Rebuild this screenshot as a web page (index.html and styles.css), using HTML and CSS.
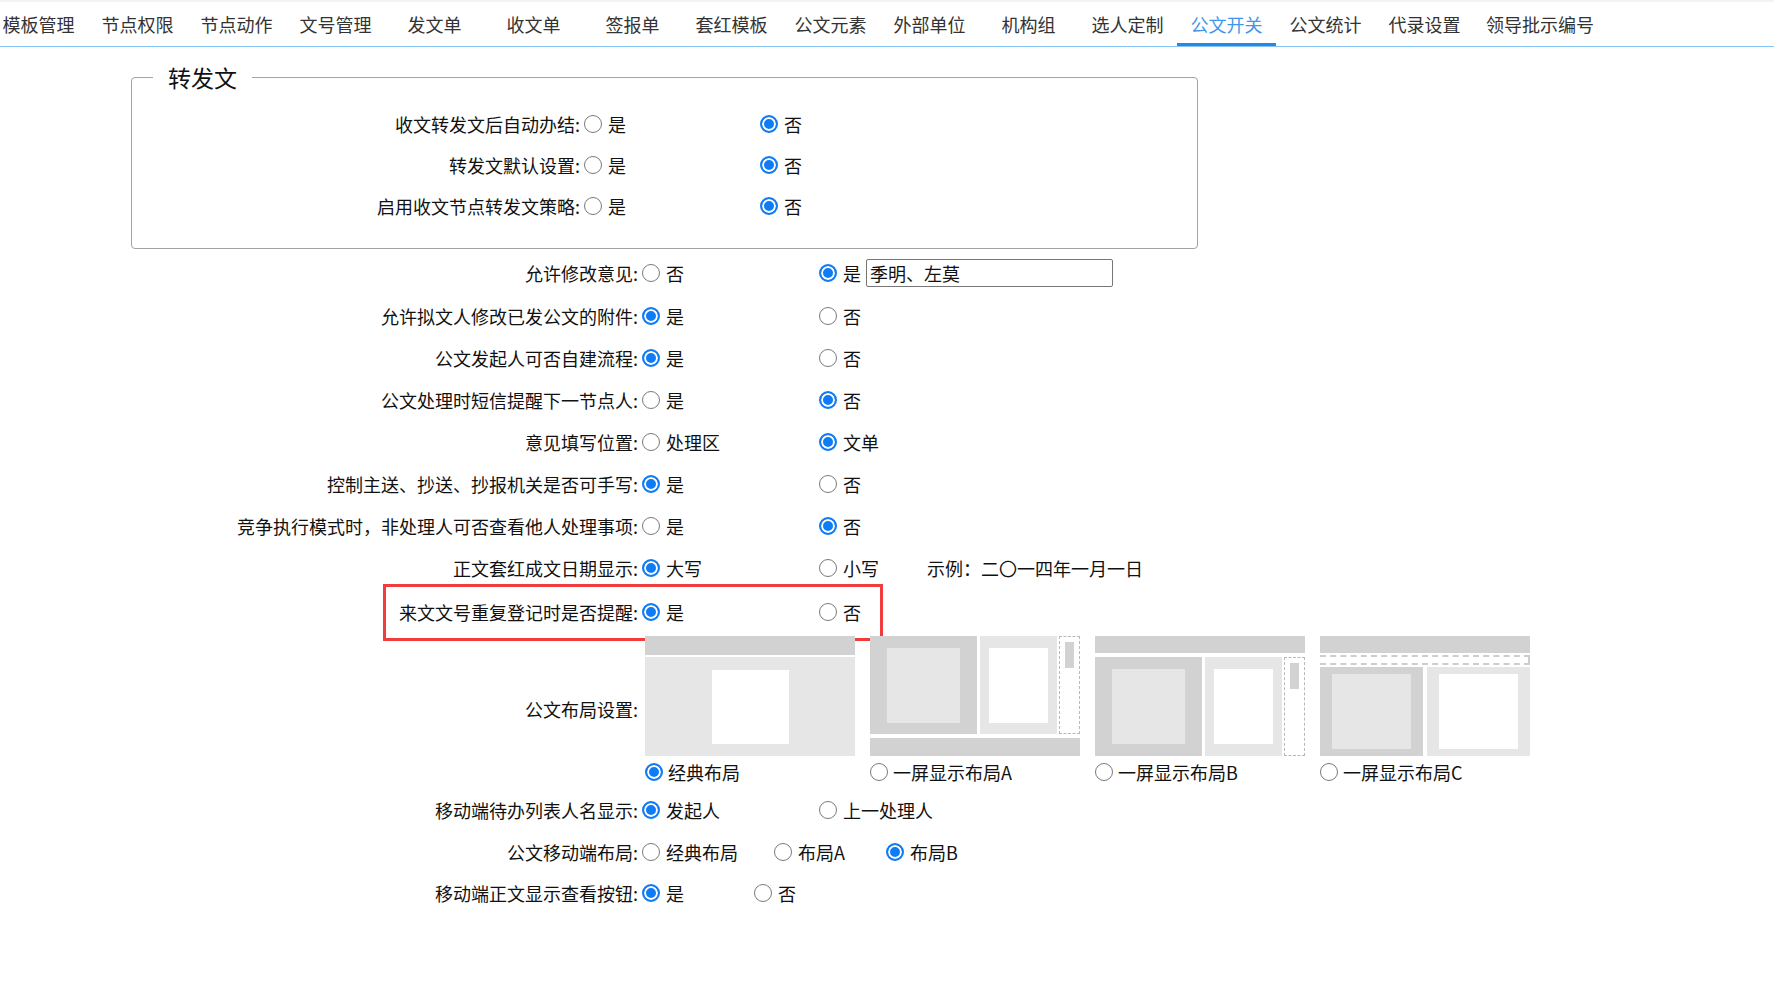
FILE: index.html
```html
<!DOCTYPE html>
<html lang="zh-CN">

<head>
    <meta charset="UTF-8">
    <meta name="viewport" content="width=device-width, initial-scale=1.0">
    <title>公文开关</title>
    <link rel="stylesheet" href="styles.css">
</head>

<body>
    <div class="tabs">
        <a href="javascript:;" class="tab">模板管理</a>
        <a href="javascript:;" class="tab">节点权限</a>
        <a href="javascript:;" class="tab">节点动作</a>
        <a href="javascript:;" class="tab">文号管理</a>
        <a href="javascript:;" class="tab">发文单</a>
        <a href="javascript:;" class="tab">收文单</a>
        <a href="javascript:;" class="tab">签报单</a>
        <a href="javascript:;" class="tab">套红模板</a>
        <a href="javascript:;" class="tab">公文元素</a>
        <a href="javascript:;" class="tab">外部单位</a>
        <a href="javascript:;" class="tab">机构组</a>
        <a href="javascript:;" class="tab">选人定制</a>
        <a href="javascript:;" class="tab on">公文开关</a>
        <a href="javascript:;" class="tab">公文统计</a>
        <a href="javascript:;" class="tab">代录设置</a>
        <a href="javascript:;" class="tab">领导批示编号</a>
    </div>

    <div class="page">
        <fieldset class="group">
            <legend>转发文</legend>
            <div class="row">
                <span class="label">收文转发文后自动办结:</span>
                <label class="opt"><input type="radio" name="r1">是</label>
                <label class="opt"><input type="radio" name="r1" checked>否</label>
            </div>
            <div class="row">
                <span class="label">转发文默认设置:</span>
                <label class="opt"><input type="radio" name="r2">是</label>
                <label class="opt"><input type="radio" name="r2" checked>否</label>
            </div>
            <div class="row">
                <span class="label">启用收文节点转发文策略:</span>
                <label class="opt"><input type="radio" name="r3">是</label>
                <label class="opt"><input type="radio" name="r3" checked>否</label>
            </div>
        </fieldset>

        <div class="row row-first">
            <span class="label">允许修改意见:</span>
            <label class="opt"><input type="radio" name="r4">否</label>
            <label class="opt"><input type="radio" name="r4" checked>是</label>
            <input type="text" class="names" value="季明、左莫">
        </div>
        <div class="row">
            <span class="label">允许拟文人修改已发公文的附件:</span>
            <label class="opt"><input type="radio" name="r5" checked>是</label>
            <label class="opt"><input type="radio" name="r5">否</label>
        </div>
        <div class="row">
            <span class="label">公文发起人可否自建流程:</span>
            <label class="opt"><input type="radio" name="r6" checked>是</label>
            <label class="opt"><input type="radio" name="r6">否</label>
        </div>
        <div class="row">
            <span class="label">公文处理时短信提醒下一节点人:</span>
            <label class="opt"><input type="radio" name="r7">是</label>
            <label class="opt"><input type="radio" name="r7" checked>否</label>
        </div>
        <div class="row">
            <span class="label">意见填写位置:</span>
            <label class="opt"><input type="radio" name="r8">处理区</label>
            <label class="opt"><input type="radio" name="r8" checked>文单</label>
        </div>
        <div class="row">
            <span class="label">控制主送、抄送、抄报机关是否可手写:</span>
            <label class="opt"><input type="radio" name="r9" checked>是</label>
            <label class="opt"><input type="radio" name="r9">否</label>
        </div>
        <div class="row">
            <span class="label">竞争执行模式时，非处理人可否查看他人处理事项:</span>
            <label class="opt"><input type="radio" name="r10">是</label>
            <label class="opt"><input type="radio" name="r10" checked>否</label>
        </div>
        <div class="row">
            <span class="label">正文套红成文日期显示:</span>
            <label class="opt"><input type="radio" name="r11" checked>大写</label>
            <label class="opt opt-sm"><input type="radio" name="r11">小写</label>
            <span class="hint">示例：二〇一四年一月一日</span>
        </div>
        <div class="row row-flag">
            <span class="label">来文文号重复登记时是否提醒:</span>
            <label class="opt"><input type="radio" name="r12" checked>是</label>
            <label class="opt"><input type="radio" name="r12">否</label>
            <div class="mark"></div>
        </div>

        <div class="row row-layout">
            <span class="label">公文布局设置:</span>
            <div class="layouts">
                <div class="layout">
                    <div class="thumb">
                        <div class="bar"></div>
                        <div class="pane pane-light pane-fill gap-2"><i class="sq sq-white sq-classic"></i></div>
                    </div>
                    <label class="cap"><input type="radio" name="r13" checked>经典布局</label>
                </div>
                <div class="layout">
                    <div class="thumb">
                        <div class="split split-a">
                            <div class="pane pane-dark pane-l"><i class="sq sq-light"></i></div>
                            <div class="pane pane-light pane-m"><i class="sq sq-white sq-m"></i></div>
                            <div class="vscroll"><i></i></div>
                        </div>
                        <div class="bar bar-bottom"></div>
                    </div>
                    <label class="cap"><input type="radio" name="r13">一屏显示布局A</label>
                </div>
                <div class="layout">
                    <div class="thumb">
                        <div class="bar bar-thin"></div>
                        <div class="split split-b">
                            <div class="pane pane-dark pane-l"><i class="sq sq-light"></i></div>
                            <div class="pane pane-light pane-m"><i class="sq sq-white sq-m"></i></div>
                            <div class="vscroll"><i></i></div>
                        </div>
                    </div>
                    <label class="cap"><input type="radio" name="r13">一屏显示布局B</label>
                </div>
                <div class="layout">
                    <div class="thumb">
                        <div class="bar bar-thin"></div>
                        <div class="hscroll"></div>
                        <div class="split split-c">
                            <div class="pane pane-dark pane-half"><i class="sq sq-light sq-c"></i></div>
                            <div class="pane pane-light pane-half"><i class="sq sq-white sq-c"></i></div>
                        </div>
                    </div>
                    <label class="cap"><input type="radio" name="r13">一屏显示布局C</label>
                </div>
            </div>
        </div>

        <div class="row">
            <span class="label">移动端待办列表人名显示:</span>
            <label class="opt"><input type="radio" name="r14" checked>发起人</label>
            <label class="opt"><input type="radio" name="r14">上一处理人</label>
        </div>
        <div class="row row-short">
            <span class="label">公文移动端布局:</span>
            <label class="opt opt-md"><input type="radio" name="r15">经典布局</label>
            <label class="opt opt-sm"><input type="radio" name="r15">布局A</label>
            <label class="opt"><input type="radio" name="r15" checked>布局B</label>
        </div>
        <div class="row">
            <span class="label">移动端正文显示查看按钮:</span>
            <label class="opt opt-sm"><input type="radio" name="r16" checked>是</label>
            <label class="opt"><input type="radio" name="r16">否</label>
        </div>
    </div>
</body>

</html>
```

FILE: styles.css
```css
body {
    margin: 0;
    background: #fff;
    color: #111;
    font-family: "Noto Sans CJK SC", "Noto Sans", sans-serif;
    font-size: 18px;
}

/* 顶部页签 */
.tabs {
    display: flex;
    margin-left: -11px;
    border-top: 2px solid #f3f3f3;
    border-bottom: 1px solid #84c4f4;
}

.tab {
    min-width: 99px;
    height: 44px;
    line-height: 44px;
    padding: 0 12px;
    box-sizing: border-box;
    text-align: center;
    text-decoration: none;
    color: #333;
    white-space: nowrap;
}

.tab.on {
    color: #4195ea;
    box-shadow: inset 0 -3px 0 #2388e6;
}

/* 表单 */
.row {
    display: flex;
    align-items: center;
    height: 42px;
    position: relative;
}

.row-first {
    height: 44px;
    margin-top: 2px;
}

.row-flag {
    height: 46px;
}

.row-short {
    height: 41px;
}

.label {
    width: 638px;
    flex-shrink: 0;
    text-align: right;
    white-space: nowrap;
}

.opt {
    display: flex;
    align-items: center;
    width: 177px;
    flex-shrink: 0;
    white-space: nowrap;
}

.opt-md {
    width: 132px;
}

.opt-sm {
    width: 112px;
}

/* 单选框 */
input[type="radio"] {
    -webkit-appearance: none;
    appearance: none;
    width: 18px;
    height: 18px;
    margin: 0 6px 0 4px;
    flex-shrink: 0;
    box-sizing: border-box;
    border: 1px solid #7a7a7a;
    border-radius: 50%;
    background: #fff;
}

input[type="radio"]:checked {
    border: 2px solid #0f7cf6;
    background: #0f7cf6;
    box-shadow: inset 0 0 0 2px #fff;
}

.names {
    width: 247px;
    height: 28px;
    box-sizing: border-box;
    margin-left: -126px;
    padding: 0 3px;
    border: 1px solid #767676;
    border-radius: 2px;
    font-family: inherit;
    font-size: 18px;
    color: #111;
}

.hint {
    white-space: nowrap;
}

/* 标注框 */
.mark {
    position: absolute;
    left: 383px;
    top: -5px;
    width: 500px;
    height: 57px;
    box-sizing: border-box;
    border: 3px solid #f03c3c;
}

/* 转发文分组 */
.group {
    width: 1067px;
    box-sizing: border-box;
    margin: 14px 0 0 131px;
    padding: 10px 0 22px;
    border: 1px solid #a3a3a3;
    border-radius: 4px;
}

.group legend {
    margin-left: 21px;
    padding: 0 15px;
    font-size: 23px;
    line-height: 32px;
    color: #111;
}

.group .row {
    height: 41px;
}

.group .label {
    width: 448px;
}

.group .opt {
    width: 176px;
}

/* 布局缩略图 */
.row-layout {
    height: 154px;
}

.row-layout .label {
    padding-bottom: 6px;
}

.layouts {
    display: flex;
    gap: 15px;
    margin-left: 7px;
    padding-top: 1px;
    align-self: flex-start;
}

.layout {
    width: 210px;
}

.thumb {
    width: 210px;
    height: 120px;
    display: flex;
    flex-direction: column;
}

.bar {
    height: 19px;
    background: #d2d2d2;
    flex-shrink: 0;
}

.bar-thin {
    height: 17px;
}

.bar-bottom {
    height: 18px;
    margin-top: 4px;
}

.pane {
    display: flex;
    align-items: center;
    justify-content: center;
}

.pane-dark {
    background: #d2d2d2;
}

.pane-light {
    background: #e6e6e6;
}

.pane-fill {
    flex: 1;
}

.gap-2 {
    margin-top: 2px;
}

.split {
    display: flex;
    flex: 1;
}

.split-b {
    margin-top: 4px;
}

.split-c {
    margin-top: 2px;
    gap: 4px;
}

.pane-l {
    width: 107px;
}

.pane-m {
    width: 77px;
    margin-left: 3px;
}

.pane-half {
    flex: 1;
}

.sq {
    display: block;
}

.sq-white {
    background: #fff;
}

.sq-light {
    background: #e6e6e6;
    width: 73px;
    height: 75px;
}

.sq-classic {
    width: 77px;
    height: 74px;
}

.sq-m {
    width: 59px;
    height: 75px;
}

.sq-c {
    width: 79px;
    height: 75px;
}

.vscroll {
    width: 21px;
    margin-left: 2px;
    box-sizing: border-box;
    border: 1px dashed #b8b8b8;
    background: #fff;
    display: flex;
    justify-content: center;
    padding-top: 5px;
}

.vscroll i {
    display: block;
    width: 9px;
    height: 26px;
    background: #d2d2d2;
}

.hscroll {
    height: 10px;
    margin-top: 2px;
    box-sizing: border-box;
    border: 2px dashed #cdcdcd;
    border-left: 0;
    background: #fff;
}

.cap {
    display: flex;
    align-items: center;
    height: 24px;
    margin-top: 4px;
    white-space: nowrap;
}

.cap input[type="radio"] {
    margin: 0 5px 0 0;
}
```
